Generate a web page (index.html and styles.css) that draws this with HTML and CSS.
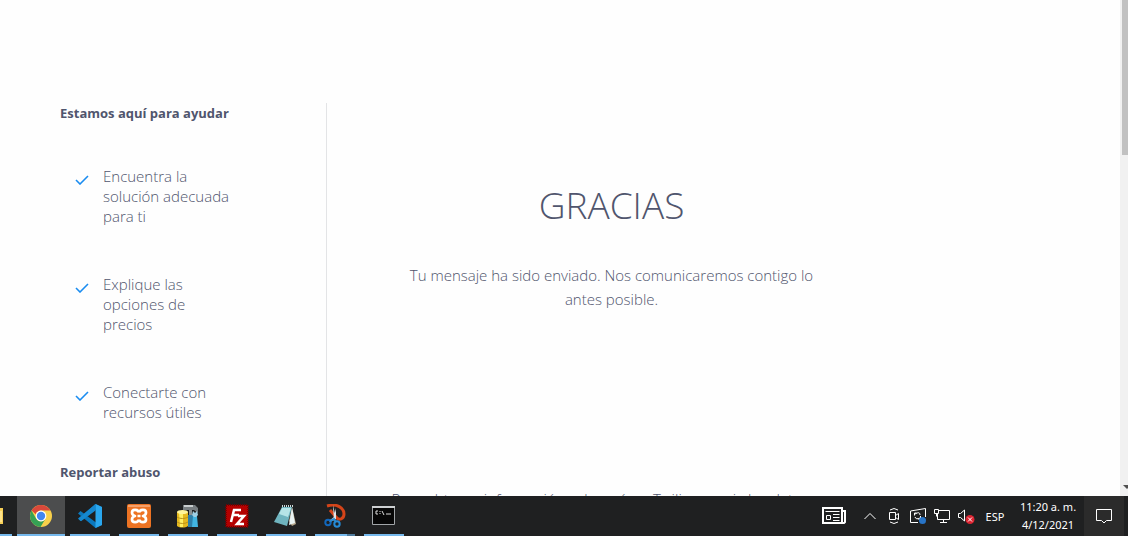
FILE: index.html
```html
<!DOCTYPE html>
<html lang="es">
<head>
<meta charset="utf-8">
<meta name="viewport" content="width=device-width, initial-scale=1">
<title>Gracias</title>
<link rel="stylesheet" href="styles.css">
</head>
<body>
<div class="viewport">
  <div class="page">
    <aside class="sidebar">
      <h2 class="side-title">Estamos aquí para ayudar</h2>
      <ul class="benefits">
        <li class="benefit"><svg class="check" viewBox="0 0 14 10"><path d="M1 5l4 4 8-8"/></svg><span>Encuentra la solución adecuada para ti</span></li>
        <li class="benefit"><svg class="check" viewBox="0 0 14 10"><path d="M1 5l4 4 8-8"/></svg><span>Explique las opciones de precios</span></li>
        <li class="benefit"><svg class="check" viewBox="0 0 14 10"><path d="M1 5l4 4 8-8"/></svg><span>Conectarte con recursos útiles</span></li>
      </ul>
      <h2 class="side-title">Reportar abuso</h2>
    </aside>
    <main class="content">
      <h1 class="title">GRACIAS</h1>
      <p class="message">Tu mensaje ha sido enviado. Nos comunicaremos contigo lo antes posible.</p>
      <p class="privacy">Para obtener información sobre cómo Twilio maneja los datos</p>
    </main>
  </div>
  <div class="scrollbar"><div class="thumb"></div><svg class="scroll-arrow" viewBox="0 0 8 6"><path d="M3 0h8L7 4z"/></svg></div>
</div>
<footer class="taskbar">
  <nav class="apps">
    <button class="app app-cut" aria-label="Explorador"><svg class="icon" viewBox="0 0 24 24"><path fill="#f6cf57" d="M0 4h24v16H0z"/><path fill="#ffe28a" d="M0 7h23v11H0z"/></svg></button>
    <button class="app active" aria-label="Chrome"><svg class="icon" viewBox="0 0 24 24"><circle cx="12" cy="12" r="11" fill="#f8d04b"/><path fill="#d9483b" d="M2.500 6.500A11 11 0 0 1 21.500 6.500H12a5.500 5.500 0 0 0-5.200 3.700z"/><path fill="#35a155" d="M2.500 6.500A11 11 0 0 0 11.500 23l5-8.200a5.500 5.500 0 0 1-9.300 0z"/><circle cx="12" cy="12" r="5.400" fill="#fff"/><circle cx="12" cy="12" r="4.200" fill="#4286f0"/></svg></button>
    <button class="app" aria-label="Visual Studio Code"><svg class="icon" viewBox="0 0 24 24"><path fill="#0b78bd" d="M17.500 0L24 3v18l-6.500 3L0 9.500 2.500 7 18 18.500V5.500L2.500 17 0 14.500z"/><path fill="#2aa7ee" d="M17.500 0L24 3v18l-6.500 3z"/><path fill="#1688cf" d="M17.500 0v6.500L3 17.200.3 14.800z"/></svg></button>
    <button class="app" aria-label="XAMPP"><svg class="icon" viewBox="0 0 24 24"><rect width="24" height="24" rx="2" fill="#ed7323"/><path d="M1 1h22v2H1z" fill="#f6a06a"/><path d="M12 8.500C11 5 5 5 5 8.500c0 2 1 3 3 3.500-2 .5-3 1.500-3 3.500C5 19 11 19 12 15.500M12 8.500C13 5 19 5 19 8.500c0 2-1 3-3 3.500 2 .5 3 1.500 3 3.500 0 3.500-6 3.500-7 0M10.500 12h3" fill="none" stroke="#fff" stroke-width="2.700" stroke-linejoin="round"/></svg></button>
    <button class="app" aria-label="Base de datos"><svg class="icon" viewBox="0 0 24 24"><path fill="#e5b91f" d="M1 8h11v14c-3 2-8 2-11 0z"/><path fill="#fff064" d="M3 8h4v15H4z"/><ellipse cx="6.500" cy="8" rx="5.500" ry="2" fill="#fff59a"/><path d="M1 13c3 2 8 2 11 0M1 18c3 2 8 2 11 0" stroke="#ba911b" fill="none"/><path fill="#777d80" d="M7 1h12l3 3v5l-4-3H7z"/><path fill="#c9cecf" d="M8 1h9v2H8z"/><path fill="#2e7fa8" d="M12 11h5v12h-5z"/><path fill="#8b9294" d="M13 6h3v5h-3z"/><path fill="#42b5e1" d="M17 12h4l1 11h-6z"/><path fill="#9fd0e4" d="M17 7l2 2 2-2 1 4-2 2h-2l-2-2z"/></svg></button>
    <button class="app" aria-label="FileZilla"><svg class="icon" viewBox="0 0 24 24"><path fill="#b40000" d="M1 1h22v22H1z"/><path d="M1 1h22v22H1z" fill="none" stroke="#770000" stroke-width="2" stroke-dasharray="1 1"/><path d="M6 18L9 6h7M8 11h6M13 12h6l-7 8h7" fill="none" stroke="#fff" stroke-width="2.500"/></svg></button>
    <button class="app" aria-label="Bloc de notas"><svg class="icon" viewBox="0 0 24 24"><path fill="#b6a68b" d="M18 3l4 17-4 2-3-5z"/><path fill="#e9f4f5" d="M18 3l3 16-6 2z"/><path fill="#6fb4bf" d="M8 3l10 0-5 19-13-4z"/><path fill="#b6e4e7" d="M8 4l9 0-3 9L5 10z"/><path d="M8 2h11" stroke="#cbd8d9" stroke-width="2" stroke-dasharray="1 1"/></svg></button>
    <button class="app app-multi" aria-label="Recortes"><svg class="icon" viewBox="0 0 24 24"><path d="M4 2c10-3 17 2 17 8 0 5-5 7-8 3L7 6" fill="none" stroke="#d44419" stroke-width="3"/><path fill="#e2e6e8" d="M10 1l3 13-2 3zM13 4v11l-6 3-1-1 5-4z"/><circle cx="5" cy="18.500" r="2.700" fill="none" stroke="#1267bb" stroke-width="2"/><circle cx="14" cy="20" r="2.700" fill="none" stroke="#258bd7" stroke-width="2"/><path d="M7 17l4-2 2 3" fill="none" stroke="#2c8bd1" stroke-width="2"/></svg></button>
    <button class="app" aria-label="Símbolo del sistema"><svg class="icon" viewBox="0 0 24 24"><path fill="#070707" stroke="#a1a5a8" d="M.5 2.500h22v18H.5z"/><path fill="#cdd0d2" d="M0 2h23v2H0z"/><path d="M6 7H4v3h2M8 7v1M8 9v1M10 7l2 4M14 10h5" fill="none" stroke="#ddd"/></svg></button>
  </nav>
  <div class="tray">
    <button class="tray-button" aria-label="Noticias"><svg class="news" viewBox="0 0 24 18"><path d="M1 1h19v15H1zM20 4h3v11l-1 1H2"/><path class="thin" d="M3.500 4.500h14M11 7.500h6.500M11 10.500h6.500M11 13.500h6.500M4.500 8.500h4v4h-4z"/></svg></button>
    <button class="tray-button" aria-label="Mostrar iconos ocultos"><svg class="tray-icon" viewBox="0 0 16 16"><path d="M2.500 11L8 5.500l5.500 5.500"/></svg></button>
    <button class="tray-button" aria-label="Cámara"><svg class="tray-icon" viewBox="0 0 16 16"><path d="M3.500 4.500h6v7h-6zM9.500 7.500l3-2v6l-3-2M4 2q4-3 8 0M4 14q4 3 8 0"/></svg></button>
    <button class="tray-button" aria-label="Sincronización"><svg class="tray-icon" viewBox="0 0 16 16"><path d="M8 14.500H.5V3l15-2.500V9M4.500 7.500V5h2M5 6q5-3 5 1M10.500 8v3H8M10 10q-4 2-5-1"/><circle class="blue-dot" cx="12.500" cy="12.500" r="3.500"/></svg></button>
    <button class="tray-button" aria-label="Red"><svg class="tray-icon" viewBox="0 0 16 16"><path d="M5 2.500h10.500v9h-12V6M.5 1.500h4v4h-4zM2.500 5.500v3M9.500 11.500v3M6 14.500h7"/></svg></button>
    <button class="tray-button" aria-label="Sonido silenciado"><svg class="tray-icon" viewBox="0 0 16 16"><path d="M.5 5.500h2l4-3.500v11l-4-3.500h-2z"/><circle class="red-dot" cx="12" cy="11.500" r="4.500"/><path d="M10 9.500l4 4m0-4l-4 4"/></svg></button>
    <button class="language">ESP</button>
    <button class="clock"><span>11:20 a. m.</span><span>4/12/2021</span></button>
    <button class="notifications" aria-label="Notificaciones"><svg class="tray-icon" viewBox="0 0 16 16"><path d="M.5 1.500h15v11h-5L8 15l-2.500-2.500h-5z"/></svg></button>
  </div>
</footer>
</body>
</html>
```
FILE: styles.css
```css
* { box-sizing: border-box; }

body {
  margin: 0;
  height: 100vh;
  display: flex;
  flex-direction: column;
  overflow: hidden;
  background: #fefefe;
  color: #50556d;
  font-family: "Open Sans", sans-serif;
  font-size: 15px;
  font-weight: 300;
}

h1, h2, p, ul { margin: 0; padding: 0; font-weight: inherit; }
button { border: 0; padding: 0; background: none; color: inherit; font: inherit; }
svg { display: block; flex: none; }

.viewport { flex: 1; min-height: 0; display: flex; overflow: hidden; }
.page { flex: 1; display: flex; padding-top: 103px; }
.sidebar { width: 327px; flex: none; padding-left: 60px; border-right: 1px solid #e3e4e6; }
.side-title { font-size: 13px; line-height: 20px; font-weight: 700; }
.benefits { list-style: none; padding: 43px 92px 40px 15px; display: flex; flex-direction: column; gap: 48px; }
.benefit { display: flex; gap: 14px; line-height: 20px; }
.check { width: 14px; height: 10px; margin-top: 9px; fill: none; stroke: #1a8cf0; stroke-width: 1.6; }

.content { flex: 1; padding: 76px 224px 0 0; display: flex; flex-direction: column; align-items: center; }
.title { font-size: 37px; line-height: 52px; }
.message { width: 440px; max-width: 100%; margin-top: 32px; text-align: center; line-height: 24px; }
.privacy { width: 440px; margin-top: 178px; line-height: 20px; white-space: nowrap; }

.scrollbar { width: 8px; background: #f1f1f1; display: flex; flex-direction: column; justify-content: space-between; padding-bottom: 5px; }
.thumb { height: 155px; margin-left: 2px; background: #c1c1c1; }
.scroll-arrow { width: 8px; height: 6px; fill: #505050; }

.taskbar {
  height: 40px;
  flex: none;
  display: flex;
  justify-content: space-between;
  background: #1f2021;
  color: #fff;
  font-weight: 400;
}
.apps { display: flex; gap: 9px; }
.app { width: 40px; display: flex; align-items: center; justify-content: center; border-bottom: 2px solid #76b9ed; padding-top: 2px; }
.app-cut { width: 12px; justify-content: flex-end; padding-right: 9px; margin-right: -4px; overflow: hidden; }
.active { width: 48px; background: #4c4d4e; margin-right: -4px; }
.app-multi { border-image: linear-gradient(to right, #76b9ed 78%, #4f7b9d 78%) 2; }
.icon { width: 24px; height: 24px; }

.tray { display: flex; align-items: stretch; }
.tray-button { width: 24px; display: flex; align-items: center; justify-content: center; }
.tray-button:first-child { margin-right: 12px; }
.tray-icon { width: 16px; height: 16px; fill: none; stroke: #fff; overflow: visible; }
.news { width: 24px; height: 18px; fill: none; stroke: #fff; stroke-width: 2; }
.news .thin { stroke-width: 1; }
.tray-icon .blue-dot { fill: #2874c7; stroke: none; }
.tray-icon .red-dot { fill: #dd2532; stroke: none; }
.language, .clock { font-family: "Noto Sans", sans-serif; font-size: 11px; }
.language { width: 34px; }
.clock { width: 72px; display: flex; flex-direction: column; align-items: center; justify-content: center; line-height: 18px; white-space: nowrap; }
.notifications { width: 40px; margin-right: 4px; display: flex; align-items: center; justify-content: center; background: #2b2b2b; }
```
